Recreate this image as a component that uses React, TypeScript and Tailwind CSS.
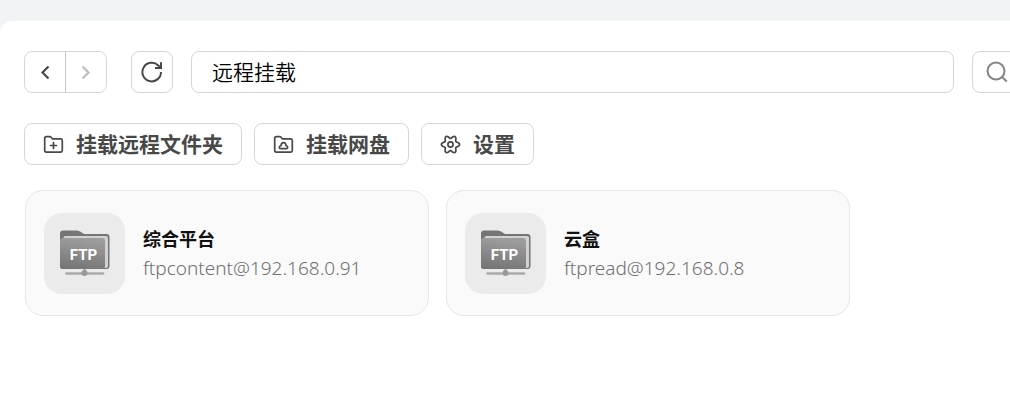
import React from 'react'

const mounts = [
    {name: '综合平台', account: 'ftpcontent@192.168.0.91'},
    {name: '云盒', account: 'ftpread@192.168.0.8'},
]

const FolderIcon = ({children}: { children: React.ReactNode }) => (
    <svg className="size-[21px]" viewBox="0 0 21 21" fill="none" stroke="currentColor" strokeWidth="1.7"
         strokeLinecap="round" strokeLinejoin="round" aria-hidden="true">
        <path d="M1.7 16.6V4.4Q1.7 2.6 3.5 2.6H6.6Q7.5 2.6 8.1 3.3L9.3 4.8H17.7Q19.3 4.8 19.3 6.4V16.6Q19.3 18.2 17.9 18.2H3.1Q1.7 18.2 1.7 16.6Z"/>
        {children}
    </svg>
)

// six-lobed gear outline
const gearPoints = Array.from({length: 90}, (_, i) => {
    const a = (i * Math.PI) / 45
    const r = 7.6 + 1.5 * Math.cos(6 * a)
    return `${(10.5 + r * Math.cos(a)).toFixed(2)},${(10.5 + r * Math.sin(a)).toFixed(2)}`
}).join(' ')

const GearIcon = () => (
    <svg className="size-[21px]" viewBox="0 0 21 21" fill="none" stroke="currentColor" strokeWidth="1.7"
         strokeLinejoin="round" aria-hidden="true">
        <polygon points={gearPoints}/>
        <circle cx="10.5" cy="10.5" r="2.6"/>
    </svg>
)

const FtpIcon = () => (
    <svg className="size-[81px]" viewBox="0 0 81 81" aria-hidden="true">
        <defs>
            <linearGradient id="folder" x1="0.2" y1="0" x2="0" y2="1">
                <stop offset="0" stopColor="#9c9c9c"/>
                <stop offset="1" stopColor="#737373"/>
            </linearGradient>
        </defs>
        <path d="M16 20.5Q16 17.5 19 17.5H33Q35 17.5 37 19L40 21H62.5Q65.5 21 65.5 24V53Q65.5 56 62.5 56H19Q16 56 16 53Z" fill="#757575"/>
        <path d="M19.5 25Q19.5 23 21.5 23H62Q64 23 64 25V53Q64 55 62 55H20Z" fill="#d2d2d2"/>
        <path d="M16 28Q16 25 19 25H58Q61 25 61 28V53Q61 56 58 56H19Q16 56 16 53Z" fill="url(#folder)"/>
        <path d="M22.5 60.5H59" stroke="#aaa" strokeWidth="2.6" strokeLinecap="round"/>
        <path d="M40.5 56V60" stroke="#aaa" strokeWidth="2.5"/>
        <circle cx="40.5" cy="60" r="3" fill="#999"/>
        <text x="39.5" y="47" textAnchor="middle" fill="#fff" fontSize="15" fontWeight="700"
              fontFamily="Roboto, sans-serif">FTP</text>
    </svg>
)

const ActionButton = ({icon, label}: { icon: React.ReactNode, label: string }) => (
    <button className="flex h-[42px] items-center gap-3 rounded-lg border border-[#d6d6d6] px-[18px] text-[21px] font-bold text-[#484848]">
        {icon}
        {label}
    </button>
)

const App = () => {
    return (
        <div className="flex min-h-screen flex-col overflow-hidden bg-[#f1f3f5] pt-[21px] font-['Noto_Sans_CJK_SC',sans-serif]">
            <main className="flex-1 rounded-tl-xl bg-white pt-[30px] pl-6">
                <div className="-mr-40 flex items-center">
                    <div className="flex h-[42px] rounded-lg border border-[#d6d6d6] text-[#484848]">
                        <button aria-label="后退" className="flex w-10 items-center justify-center">
                            <svg className="size-[21px]" viewBox="0 0 21 21" fill="none" stroke="currentColor" strokeWidth="2.2">
                                <path d="M13.5 4.5L7.5 10.5L13.5 16.5"/>
                            </svg>
                        </button>
                        <button aria-label="前进" disabled className="flex w-[41px] items-center justify-center border-l border-[#c8c8c8] text-[#bdbdbd]">
                            <svg className="size-[21px]" viewBox="0 0 21 21" fill="none" stroke="currentColor" strokeWidth="2.2">
                                <path d="M6.5 4.5L12.5 10.5L6.5 16.5"/>
                            </svg>
                        </button>
                    </div>
                    <button aria-label="刷新" className="ml-6 flex size-[42px] items-center justify-center rounded-lg border border-[#d6d6d6] text-[#484848]">
                        <svg className="size-6" viewBox="0 0 24 24" fill="none" stroke="currentColor" strokeWidth="2">
                            <path d="M21 12A9.3 9.3 0 1 1 18.3 5.5L20.5 7.5"/>
                            <path d="M21 2.2V8H15"/>
                        </svg>
                    </button>
                    <input aria-label="路径" defaultValue="远程挂载"
                           className="ml-[18px] h-[42px] min-w-0 flex-1 rounded-lg border border-[#d6d6d6] px-5 pb-0.5 text-[21px] font-[350] text-black"/>
                    <label className="ml-[18px] flex h-[42px] w-[198px] items-center rounded-lg border border-[#d6d6d6] pl-3 text-[#858585]">
                        <svg className="size-6" viewBox="0 0 24 24" fill="none" stroke="currentColor" strokeWidth="2">
                            <circle cx="11" cy="11" r="8.5"/>
                            <path d="M17 17L21.8 21.5"/>
                        </svg>
                        <input type="search" aria-label="搜索" className="min-w-0 flex-1"/>
                    </label>
                </div>

                <div className="mt-[30px] flex flex-wrap gap-3">
                    <ActionButton label="挂载远程文件夹" icon={
                        <FolderIcon><path d="M10.5 8.5V14.5M7.5 11.5H13.5"/></FolderIcon>
                    }/>
                    <ActionButton label="挂载网盘" icon={
                        <FolderIcon>
                            <path d="M8 14.7Q6.3 14.7 6.3 13.2Q6.3 11.9 8 11.7Q8.3 8.7 10.5 8.7Q12.7 8.7 13 11.7Q14.7 11.9 14.7 13.2Q14.7 14.7 13 14.7Z"/>
                        </FolderIcon>
                    }/>
                    <ActionButton label="设置" icon={<GearIcon/>}/>
                </div>

                <ul className="mt-[25px] ml-px flex flex-wrap gap-[17px]">
                    {mounts.map((mount) => (
                        <li key={mount.name}
                            className="flex h-[126px] w-[404px] items-center gap-[18px] rounded-[18px] border border-[#e6e6e6] bg-[#fafafa] px-[18px]">
                            <div className="rounded-[18px] bg-[#ebebeb]">
                                <FtpIcon/>
                            </div>
                            <div>
                                <h2 className="text-[18px] leading-[30px] font-bold text-[#111]">{mount.name}</h2>
                                <p className="font-['Noto_Sans',sans-serif] text-[19px] leading-[30px] font-light text-[#707070]">{mount.account}</p>
                            </div>
                        </li>
                    ))}
                </ul>
            </main>
        </div>
    )
}

export default App
